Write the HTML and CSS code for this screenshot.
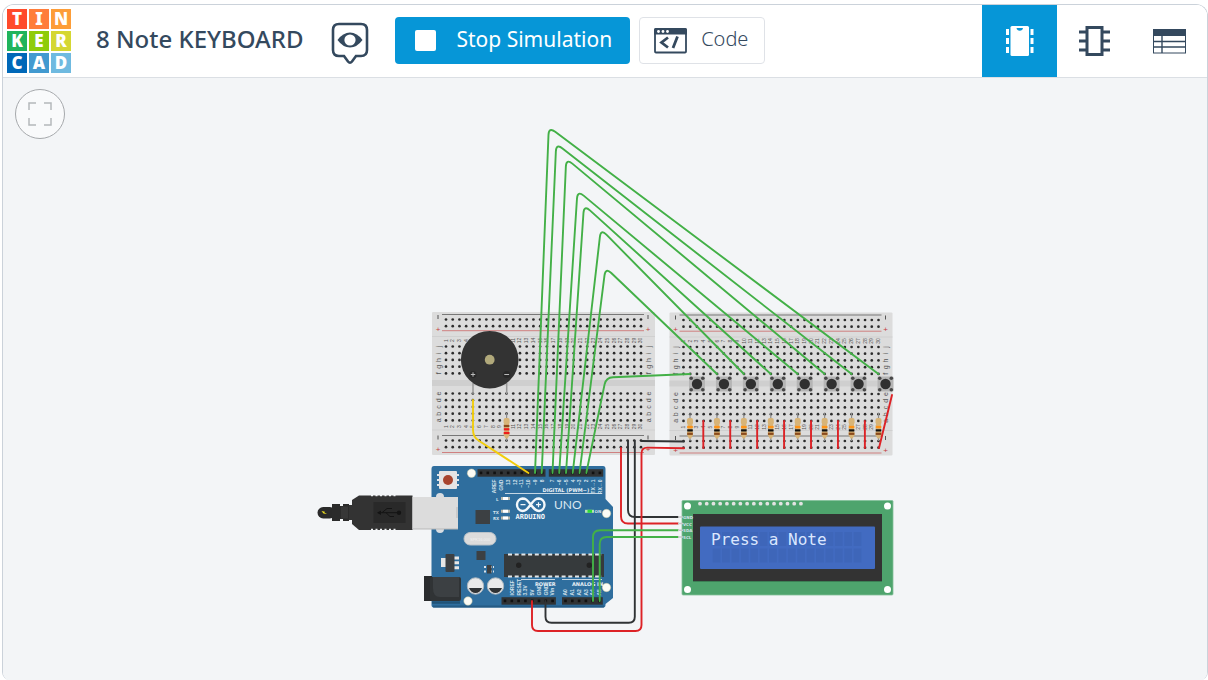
FILE: index.html
```html
<!DOCTYPE html>
<html lang="en">
<head>
<meta charset="utf-8">
<title>8 Note KEYBOARD</title>
<link rel="stylesheet" href="styles.css">
</head>
<body>
<div class="app">
  <header class="topbar">
    <a class="logo" href="#" aria-label="Tinkercad">
      <span class="tile t1">T</span><span class="tile t2">I</span><span class="tile t3">N</span>
      <span class="tile t4">K</span><span class="tile t5">E</span><span class="tile t6">R</span>
      <span class="tile t7">C</span><span class="tile t8">A</span><span class="tile t9">D</span>
    </a>
    <h1 class="title">8 Note KEYBOARD</h1>
    <button class="watch" type="button" aria-label="Visibility">
      <svg width="38" height="43" viewBox="0 0 38 43">
        <path d="M8 2H30Q36 2 36 8V28Q36 34 30 34H25L21 39.500Q19 42 17 39.500L13 34H8Q2 34 2 28V8Q2 2 8 2Z" fill="#fff" stroke="#34495e" stroke-width="2.600"/>
        <path d="M6.500 18Q12 10.500 19 10.500T31.500 18Q26 25.500 19 25.500T6.500 18Z" fill="#34495e"/>
        <circle cx="19" cy="18" r="5.600" fill="#fff"/>
      </svg>
    </button>
    <div class="actions">
      <button class="btn primary" type="button"><span class="stop"></span>Stop Simulation</button>
      <button class="btn" type="button">
        <svg width="34" height="26" viewBox="0 0 34 26">
          <rect x="1" y="1" width="31" height="23.500" rx="1" fill="#fff" stroke="#34495e" stroke-width="1.800"/>
          <path d="M0 6.500V2Q0 0 2 0H31Q33 0 33 2V6.500Z" fill="#34495e"/>
          <circle cx="4.500" cy="3.500" r="1.400" fill="#fff"/><circle cx="9" cy="3.500" r="1.400" fill="#fff"/><circle cx="13.500" cy="3.500" r="1.400" fill="#fff"/>
          <path d="M14 9.500L7.500 14.500L14 19.500M23.500 8.500L19 20" fill="none" stroke="#34495e" stroke-width="2.800"/>
        </svg>Code</button>
    </div>
    <nav class="views">
      <button class="view active" type="button" aria-label="Circuit view">
        <svg width="28" height="32" viewBox="0 0 28 32" fill="#fff">
          <rect x="4.500" y="1" width="18.500" height="30" rx="1.500"/>
          <path d="M10.500 3H17Q16.500 5.800 13.750 5.800T10.500 3Z" fill="#0696d7"/>
          <path d="M0 4H3V10H0ZM0 13H3V19H0ZM0 22H3V28H0ZM24.500 4H27.500V10H24.500ZM24.500 13H27.500V19H24.500ZM24.500 22H27.500V28H24.500Z"/>
        </svg>
      </button>
      <button class="view" type="button" aria-label="Schematic view">
        <svg width="31" height="32" viewBox="0 0 31 32">
          <path d="M0 7H31M0 16H31M0 25H31" stroke="#34495e" stroke-width="3"/>
          <rect x="8" y="2.500" width="15" height="27" fill="#fff" stroke="#34495e" stroke-width="3"/>
        </svg>
      </button>
      <button class="view" type="button" aria-label="Component list">
        <svg width="33" height="25" viewBox="0 0 33 25">
          <rect x="0.500" y="0.500" width="32" height="23.500" fill="#fff" stroke="#34495e"/>
          <rect width="33" height="7" fill="#34495e"/>
          <path d="M0 12.500H33M0 18H33M9 6V24" stroke="#34495e" stroke-width="1.400"/>
        </svg>
      </button>
    </nav>
  </header>
  <main class="workspace">
    <button class="fit" type="button" aria-label="Zoom to fit">
      <svg width="24" height="24" viewBox="0 0 24 24" fill="none" stroke="#b4b8bb" stroke-width="1.500"><path d="M1 8V1H8M16 1H23V8M23 16V23H16M8 23H1V16"/></svg>
    </button>
    <svg class="circuit" viewBox="3 78 1204 602" preserveAspectRatio="xMidYMin meet">
      <g id="boards"></g>
      <g id="usb">
        <rect x="317.500" y="507" width="18" height="11.500" rx="5.700" fill="#2a2a2a"/>
        <path d="M332 504H340V506H343V504H349V521H343V519H340V521H332Z" fill="#2b2b2b"/>
        <path d="M341 506.500H348V518.500H341Z" fill="#373737"/>
        <path d="M349 505H353V520H349Z" fill="#333"/>
        <path d="M352 500L359 495.500H412.500V530H359L352 524Z" fill="#333"/>
        <path d="M371 495.500H396M371 529.500H396" stroke="#f3f5f7" stroke-width="1.500" stroke-dasharray="2 2.500"/>
        <rect x="373.500" y="502" width="32" height="21" fill="#292929"/>
        <path d="M378 512.700H399M382 512.700L387 508.500H392M386 512.700L390 516.500H394" fill="none" stroke="#141414"/>
        <circle cx="399" cy="512.700" r="2.200" fill="#141414"/><path d="M377 512.700L381 510.500V515Z" fill="#141414"/>
        <path d="M321.500 511L325 511.800L324.300 512.500L327 514L323.500 513.600Z" fill="#f0e020"/>
      </g>
      <path id="pcb" d="M434 466H603Q605.500 466 605.500 469V499L613 507V598L605.500 604V605Q605.500 607.500 603 607.500H434Q431.500 607.500 431.500 605V469Q431.500 466 434 466Z" fill="#2f6e9e"/>
      <path d="M433 606.500H604" stroke="#255b84" stroke-width="2"/>
      <g id="arduino">
        <circle cx="440" cy="497" r="4" fill="#d8dde2"/><circle cx="440" cy="529" r="4" fill="#d8dde2"/>
        <rect x="412.500" y="497" width="45.500" height="32" fill="#dcdcdc"/><path d="M413 529H458M457 507V518" stroke="#b9b9b9"/>
        <path d="M437 474H459V476H437ZM437 479H459V481H437ZM437 484H459V486H437Z" fill="#dfe5ea"/>
        <rect x="439" y="471" width="18" height="18" rx="1" fill="#e6e4e4"/><circle cx="448" cy="480" r="5" fill="#a8442e"/>
        <g fill="#fbfbf5" stroke="#c9c6a0" stroke-width="0.500"><circle cx="471.500" cy="473.200" r="4.200"/><circle cx="606.500" cy="513.500" r="4.200"/><circle cx="606.500" cy="587.500" r="4.200"/><circle cx="468" cy="601" r="4.200"/></g>
        <rect x="475.500" y="510" width="14.500" height="14" fill="#3c4043"/><rect x="476.500" y="551" width="9" height="9" fill="#3c4043"/>
        <rect x="464" y="532.500" width="32" height="12.500" rx="6.200" fill="#dcdcdc" stroke="#bbc3c9"/><text class="faint" x="470" y="541">SPK16.000</text>
        <rect x="441" y="558" width="5" height="9" fill="#e6e6e6"/><path d="M453 558H459M453 562.800H459M453 567.700H459" stroke="#e6e6e6" stroke-width="3"/><rect x="445.500" y="554" width="9" height="18" rx="1" fill="#3c4043"/>
        <path d="M484 567H494M484 571.500H494" stroke="#dde4ea" stroke-width="2" stroke-dasharray="2 1"/><rect x="487" y="565" width="4.500" height="8.500" fill="#3c4043"/>
        <rect x="424" y="576" width="8" height="25" fill="#292b2d"/><rect x="430" y="577" width="31" height="24" rx="2" fill="#303335"/><path d="M433 577H459V597H440Q433 597 433 588Z" fill="#3c4043"/><path d="M432 602.500H460" stroke="#215377" stroke-width="2.500"/>
        <g><circle cx="475.500" cy="586" r="8.200" fill="#e9e9e9" stroke="#a9b4bd"/><path d="M469 588H482Q480 593 475.500 593T469 588Z" fill="#2f3234"/><circle cx="495.500" cy="586" r="8.200" fill="#e9e9e9" stroke="#a9b4bd"/><path d="M489 588H502Q500 593 495.500 593T489 588Z" fill="#2f3234"/></g>
        <rect x="504" y="554" width="100" height="23" fill="#363a3c"/>
        <path d="M508 554.500H602M508 576.500H602" stroke="#e2e5e7" stroke-width="1.800" stroke-dasharray="4 2.700"/>
        <circle cx="518.700" cy="565.300" r="2.700" fill="#222"/><circle cx="589.300" cy="565.300" r="2.700" fill="#222"/>
        <path d="M505 493.500H602M521 579.500H555M562 579.500H602" stroke="#c5d7e4"/>
        <path d="M501 498.500H510M501 511.300H510M501 518H510" stroke="#b9b9ad" stroke-width="3"/><path d="M503 498.500H508M503 511.300H508M503 518H508" stroke="#fff" stroke-width="3"/>
        <path d="M585 511.300H594" stroke="#b5e0b5" stroke-width="3"/><path d="M587.500 511.300H592" stroke="#2ddc38" stroke-width="3"/>
        <g fill="none" stroke="#f3f8fb" stroke-width="2.400"><path d="M530.700 504.500C527 499.500 525.500 498.500 522.500 498.500A6.300 6.300 0 0 0 522.500 511C525.500 511 527 509.500 530.700 504.500C534.400 499.500 536 498.500 539 498.500A6.300 6.300 0 0 1 539 511C536 511 534.400 509.500 530.700 504.500Z"/><path d="M520.500 504.700H525.500M536 504.700H541M538.500 502.200V507.200" stroke-width="1.200"/></g>
        <text class="brand" x="515.500" y="518.500">ARDUINO</text><text class="uno" x="554" y="509">UNO</text>
        <g class="silk"><text x="542.500" y="491.500">DIGITAL (PWM~)</text><text x="535" y="585.500">POWER</text><text x="572" y="585.500">ANALOG IN</text></g>
        <g class="mark"><text x="496" y="500.500">L</text><text x="493" y="513.500">TX</text><text x="493" y="520">RX</text><text x="594.500" y="513">ON</text></g>
      </g>
      <g id="lcd">
        <rect x="682" y="500.500" width="211" height="94.500" rx="1" fill="#4ea46d" stroke="#83c09a" stroke-width="0.800"/>
        <g fill="#fff"><circle cx="687.500" cy="506" r="3.500"/><circle cx="887.500" cy="506" r="3.500"/><circle cx="687.500" cy="589.500" r="3.500"/><circle cx="887.500" cy="589.500" r="3.500"/></g>
        <rect x="693" y="515" width="189" height="67" fill="#3b7f54"/><rect x="693" y="514" width="189" height="67" fill="#333"/><rect x="700" y="526.500" width="175" height="42.500" rx="1" fill="#426bc1"/>
        <g id="cells"></g>
        <text class="readout" x="711" y="545">Press a Note</text>
        <g class="mark"><text x="683" y="519">GND</text><text x="683" y="525.500">VCC</text><text x="683" y="532">SDA</text><text x="683" y="539">SCL</text></g>
      </g>
      <g id="parts"></g>
      <g id="wires"></g>
    </svg>
  </main>
</div>
<script src="circuit.js"></script>
</body>
</html>
```
FILE: styles.css
```css
* { box-sizing: border-box; }
body { margin: 0; background: #fff; color: #34495e; font-family: "Noto Sans", "Open Sans", sans-serif; }
button { font: inherit; color: inherit; padding: 0; cursor: pointer; }
svg { display: block; }

.app {
  display: flex;
  flex-direction: column;
  height: calc(100vh - 4px);
  margin: 4px 0 0 2px;
  border: 1px solid #cbd2da;
  border-bottom: 0;
  border-radius: 12px 12px 8px 8px;
  overflow: hidden;
}
.topbar { display: flex; align-items: stretch; flex: none; height: 73px; border-bottom: 1px solid #dbdfe4; background: #fff; }

.logo { display: grid; grid-template-columns: repeat(3, 20px); grid-auto-rows: 20px; gap: 2px; align-self: flex-start; padding: 4px 0 0 4px; text-decoration: none; }
.tile { display: flex; align-items: center; justify-content: center; color: #fff; font-size: 17px; line-height: 20px; font-weight: 900; }
.t1 { background: #ff4a2b; } .t2 { background: #ff7d3b; } .t3 { background: #fd9d38; }
.t4 { background: #20b45c; } .t5 { background: #8fcc0a; } .t6 { background: #d5d733; }
.t7 { background: #0068b8; } .t8 { background: #429ad0; } .t9 { background: #6fbae0; }

.title { margin: 0 28px 0 25px; font-size: 24px; line-height: 68px; font-weight: 500; white-space: nowrap; }
.watch { align-self: flex-start; margin-top: 17px; border: 0; background: none; }
.actions { display: flex; gap: 9px; margin-left: 26px; padding: 12px 0 13px; }
.btn { display: flex; align-items: center; gap: 13px; padding: 0 16px 3px 14px; border: 1px solid #dfe2e7; border-radius: 4px; background: #fff; font-size: 20px; line-height: 28px; font-weight: 300; white-space: nowrap; }
.primary { gap: 20px; padding: 0 18px 3px 20px; border: 0; background: #0696d7; color: #fff; font-size: 21px; font-weight: 400; }
.stop { width: 21px; height: 21px; margin-top: 3px; border-radius: 2px; background: #fff; }
.btn svg { margin-top: 3px; }

.views { display: flex; margin-left: auto; }
.view { display: flex; align-items: center; justify-content: center; width: 75px; border: 0; background: #fff; }
.active { background: #0696d7; }

.workspace { position: relative; flex: 1; min-height: 0; background: #f3f5f7; overflow: hidden; }
.fit { position: absolute; left: 12px; top: 11px; display: flex; align-items: center; justify-content: center; width: 50px; height: 50px; border: 1px solid #a6a9ac; border-radius: 50%; background: #f9fafb; }
.circuit { width: 100%; height: auto; }

.num { font: 5px "Liberation Sans", sans-serif; fill: #555; text-anchor: middle; }
.row { font: 7px "Liberation Sans", sans-serif; fill: #555; text-anchor: middle; }
.sign { font: 8px "Liberation Sans", sans-serif; fill: #c43c3c; text-anchor: middle; }
.pin { font: bold 5px "Liberation Sans", sans-serif; fill: #d5e2ec; }
.top { text-anchor: end; }
.mark { font: bold 4px "DejaVu Sans", sans-serif; fill: #d5e2ec; }
.silk { font: bold 5px "DejaVu Sans", sans-serif; fill: #e9f1f6; }
.brand { font: bold 7px "DejaVu Sans Mono", monospace; fill: #f3f8fb; }
.uno { font: 400 12px Lato, sans-serif; fill: #dbe8f1; }
.faint { font: 4px "Liberation Sans", sans-serif; fill: #f2f2f2; }
.readout { font: 16px "DejaVu Sans Mono", monospace; fill: #dbe7ff; }
```
FILE: circuit.js
```js
const NS = "http://www.w3.org/2000/svg";
const PITCH = 6.724;
const KEY_STEP = 26.93;

function add(parent, name, attrs, text) {
  const el = document.createElementNS(NS, name);
  for (const key in attrs) el.setAttribute(key, attrs[key]);
  if (text !== undefined) el.textContent = text;
  parent.appendChild(el);
  return el;
}
const layer = id => document.getElementById(id);
const rect = (p, x, y, width, height, fill, rx = 0) => add(p, "rect", { x, y, width, height, fill, rx });
const circle = (p, cx, cy, r, fill) => add(p, "circle", { cx, cy, r, fill });
const line = (p, d, stroke, width) => add(p, "path", { d, stroke, fill: "none", "stroke-width": width });
const turned = (p, cls, x, y, text) =>
  add(p, "text", { class: cls, transform: `translate(${x} ${y}) rotate(-90)` }, text);

function breadboard(x, y) {
  const g = add(layer("boards"), "g", { transform: `translate(${x} ${y})` });
  rect(g, 0, 0, 223, 143, "#dcdcdc", 1);
  rect(g, 0, 68, 223, 6, "#cfcfcf");
  line(g, "M0 24.500H223M0 118H223", "#cdcdcd", 0.8);
  line(g, "M10 2.500H212M10 123.500H212", "#777", 1);
  line(g, "M10 18.700H212M10 140.500H212", "#cf8080", 1);
  const rows = [7.5, 14.2, 128.5, 135.2];
  for (let i = 0; i < 5; i++) rows.push(34.5 + i * PITCH, 81.5 + i * PITCH);
  for (let c = 0; c < 30; c++) {
    const cx = 14 + c * PITCH;
    for (const cy of rows) circle(g, cx, cy, 1.35, "#2b2b2b");
    turned(g, "num", cx + 1.5, 28.5, c + 1);
    turned(g, "num", cx + 1.5, 114.5, c + 1);
  }
  for (const cx of [8.5, 218.5]) {
    [..."jihgf"].forEach((t, i) => turned(g, "row", cx, 34.5 + i * PITCH, t));
    [..."edcba"].forEach((t, i) => turned(g, "row", cx, 81.5 + i * PITCH, t));
    for (const cy of [5, 125.5]) line(g, `M${cx - 2.5} ${cy - 2}v4`, "#555", 1);
    for (const cy of [19.5, 140]) add(g, "text", { class: "sign", x: cx - 2.5, y: cy }, "+");
  }
}

function header(x, y, count) {
  rect(layer("arduino"), x, y, count * 6.8, 7.5, "#303335");
  for (let i = 0; i < count; i++) rect(layer("arduino"), x + 2.2 + i * 6.8, y + 2.4, 2.6, 2.6, "#111");
}

function wire(points, color, radius = 4) {
  const toward = (a, b, r) => {
    const k = r / Math.hypot(b[0] - a[0], b[1] - a[1]);
    return [a[0] + (b[0] - a[0]) * k, a[1] + (b[1] - a[1]) * k];
  };
  let d = `M${points[0]}`;
  for (let i = 1; i < points.length - 1; i++) {
    d += `L${toward(points[i], points[i - 1], radius)}Q${points[i]} ${toward(points[i], points[i + 1], radius)}`;
  }
  d += `L${points[points.length - 1]}`;
  const el = line(layer("wires"), d, color, 1.9);
  el.setAttribute("stroke-linecap", "round");
}

function resistor(x, bands) {
  const p = layer("parts");
  line(p, `M${x} 413V441`, "#8c8c8c", 1.2);
  rect(p, x - 3, 418, 6, 6.5, "#d8b477", 2);
  rect(p, x - 2.4, 422, 4.8, 12, "#d8b477");
  add(p, "path", { d: `M${x - 3} 432H${x + 3}V435L${x + 1} 438.500H${x - 1}L${x - 3} 435Z`, fill: "#d8b477" });
  bands.forEach(([y, color]) => rect(p, x - 2.8, y - 1.1, 5.6, 2.2, color));
}

function pushButton(x, y) {
  const p = layer("parts");
  rect(p, x - 8, y - 7.5, 16, 15, "#b5b5b5", 1);
  for (const dx of [-5.8, 5.8]) for (const dy of [-5.8, 5.8]) circle(p, x + dx, y + dy, 1.8, "#484848");
  circle(p, x, y, 5.2, "#303030");
}

breadboard(432, 312);
breadboard(669.5, 312.5);

header(477.5, 469.2, 10);
header(548.8, 469.2, 8);
header(501.5, 597.2, 8);
header(562, 597.2, 6);
const ard = layer("arduino");
["AREF", "GND", "13", "12", "~11", "~10", "~9", "8"].forEach((t, i) => turned(ard, "pin top", 496.3 + i * 6.75, 479.5, t));
["7", "~6", "~5", "4", "~3", "2", "TX→1", "RX←0"].forEach((t, i) => turned(ard, "pin top", 554.3 + i * 6.75, 479.5, t));
["IOREF", "RESET", "3.3V", "5V", "GND", "GND", "Vin"].forEach((t, i) => turned(ard, "pin", 513.8 + i * 6.75, 595.5, t));
["A0", "A1", "A2", "A3", "A4", "A5"].forEach((t, i) => turned(ard, "pin", 567.3 + i * 6.75, 595.5, t));

for (let i = 0; i < 16; i++) {
  circle(layer("lcd"), 700 + i * 6.73, 503.7, 1.9, "#e3e3e3");
  rect(layer("cells"), 712.7 + i * 9.4, 532, 7.7, 14, "#3e66b9");
  rect(layer("cells"), 712.7 + i * 9.4, 548.5, 7.7, 14, "#3e66b9");
}

const parts = layer("parts");
line(parts, "M473 383V394M506.700 383V394", "#999", 1.5);
circle(parts, 489.7, 359.7, 28.8, "#333");
circle(parts, 489.7, 359.7, 4.9, "#b1a97b");
circle(parts, 473, 374.5, 3.6, "#292929");
circle(parts, 506.7, 374.5, 3.6, "#292929");
line(parts, "M470.800 374.500H475.200M473 372.300V376.700M504.300 374.500H509.100", "#bbb", 1);

resistor(506.6, [[426, "#8a4a1c"], [429.3, "#ee1c1c"], [433, "#ee1c1c"]]);
for (let i = 0; i < 8; i++) {
  pushButton(697 + i * KEY_STEP, 384);
  resistor(690 + i * KEY_STEP, [[427, "#ff9418"], [430.4, "#111"], [433.8, "#8a4a1c"]]);
}

const GREEN = "#43b047", RED = "#dd2226", BLACK = "#303335";
[
  [[535, 473], [548.8, 127], [878.5, 374]],
  [[541.7, 473], [556.2, 143.5], [851.6, 374]],
  [[552.5, 473], [566.2, 158.5], [824.7, 374]],
  [[559.2, 473], [577.5, 190.5], [797.8, 374]],
  [[566, 473], [584, 205], [770.8, 374]],
  [[572.7, 473], [600.8, 229], [743.9, 374]],
  [[579.5, 473], [605.5, 267.5], [717, 374]]
].forEach(points => wire(points, GREEN, 8));
wire([[586.3, 473], [606, 377.5], [690, 374]], GREEN, 7);
wire([[473, 400], [473, 437], [528.5, 473]], "#f2cd0c", 7);
for (let i = 0; i < 7; i++) wire([[703.3 + i * KEY_STEP, 421], [703.3 + i * KEY_STEP, 448]], RED);
wire([[892, 395], [879, 448]], RED);
wire([[641.5, 441], [684, 441.5]], BLACK);
wire([[621, 448], [621, 523.5], [678, 523.5]], RED, 7);
wire([[628, 441], [628, 517], [678, 517]], BLACK, 7);
wire([[634.8, 441], [634.8, 622.7], [545.5, 622.7], [545.5, 601]], BLACK, 6);
wire([[684, 448.3], [641.5, 447.5], [641.5, 631], [532, 631], [532, 601]], RED, 6);
wire([[593, 601], [593, 530.3], [678, 530.3]], GREEN, 7);
wire([[599.7, 601], [599.7, 537], [678, 537]], GREEN, 7);
line(layer("wires"), "M678 517H683M678 523.500H683M678 530.300H683M678 537H683", "#c9c9c9", 1.5);
```
